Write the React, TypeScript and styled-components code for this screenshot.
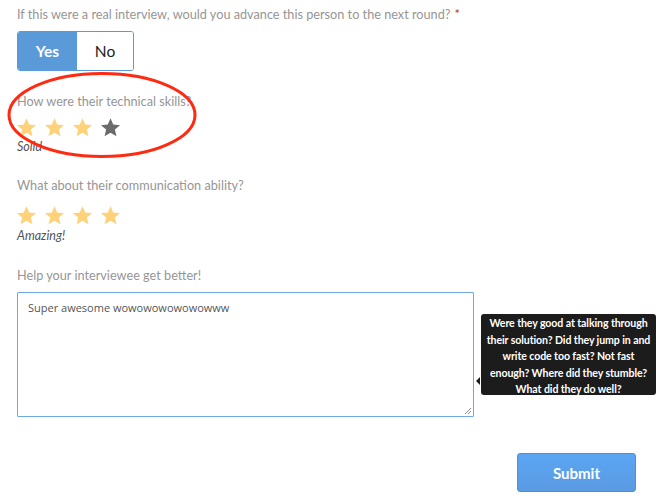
import React from "react";
import styled, { createGlobalStyle } from "styled-components";

const Global = createGlobalStyle`
  html, body { margin: 0; padding: 0; background: #fff; }
  body { font-family: Lato, "Open Sans", sans-serif; }
`;

const Page = styled.div`
  position: relative;
  width: 663px;
  height: 501px;
  box-sizing: border-box;
  padding: 5px 27px 0 17px;
  display: flex;
  flex-direction: column;
`;

const Label = styled.div<{ $mt?: number }>`
  font-size: 12.7px;
  line-height: 18px;
  color: #969696;
  margin-top: ${(p) => p.$mt ?? 0}px;
`;

const Req = styled.span`
  color: #a33;
  margin-left: 4px;
`;

const Toggle = styled.div`
  display: flex;
  width: 117px;
  height: 40px;
  margin-top: 8px;
  border: 1px solid #5b9ad8;
  border-radius: 3px;
  box-sizing: border-box;
  overflow: hidden;
`;

const ToggleBtn = styled.div<{ $active?: boolean }>`
  flex: ${(p) => (p.$active ? "0 0 59px" : "1")};
  display: flex;
  align-items: center;
  justify-content: center;
  font-size: 15.5px;
  font-weight: ${(p) => (p.$active ? 700 : 400)};
  color: ${(p) => (p.$active ? "#fff" : "#222")};
  background: ${(p) => (p.$active ? "#5b9ad8" : "#fff")};
`;

const Stars = styled.div<{ $mt: number }>`
  display: flex;
  gap: 7px;
  margin-top: ${(p) => p.$mt}px;
  margin-left: -1px;
  height: 21px;
`;

const Caption = styled.div<{ $mt: number }>`
  font-size: 12.5px;
  line-height: 16px;
  font-style: italic;
  color: #555;
  margin-top: ${(p) => p.$mt}px;
`;

const FieldRow = styled.div`
  position: relative;
  margin-top: 8px;
`;

const TextArea = styled.div`
  width: 457px;
  height: 125px;
  box-sizing: border-box;
  border: 1px solid #6ea8e6;
  border-radius: 1px;
  padding: 7px 10px;
  font-family: "Open Sans", sans-serif;
  font-size: 11px;
  line-height: 16px;
  color: #555;
  position: relative;
`;

const Grip = styled.svg`
  position: absolute;
  right: 1px;
  bottom: 1px;
`;

const Tooltip = styled.div`
  position: absolute;
  left: 464px;
  top: 22px;
  width: 175px;
  height: 81px;
  box-sizing: border-box;
  background: #1c1c1c;
  border-radius: 3px;
  color: #fff;
  font-family: Lato, sans-serif;
  font-weight: 700;
  font-size: 10.6px;
  line-height: 16.6px;
  text-align: center;
  padding: 1px 4px 0;
  letter-spacing: -0.1px;
`;

const Arrow = styled.div`
  position: absolute;
  left: -5px;
  top: 63px;
  width: 0;
  height: 0;
  border-top: 4px solid transparent;
  border-bottom: 4px solid transparent;
  border-right: 4px solid #1c1c1c;
`;

const Footer = styled.div`
  display: flex;
  justify-content: flex-end;
  margin-top: 36px;
`;

const Submit = styled.div`
  width: 119px;
  height: 39px;
  box-sizing: border-box;
  border: 1px solid #4f8fd6;
  border-radius: 3px;
  background: linear-gradient(#5ba5f3, #5a9be2);
  color: #fff;
  font-weight: 700;
  font-size: 15px;
  display: flex;
  align-items: center;
  justify-content: center;
`;

const Annotation = styled.svg`
  position: absolute;
  left: 0;
  top: 0;
  pointer-events: none;
`;

const Star = ({ on }: { on: boolean }) => (
  <svg width="21" height="21" viewBox="0 0 24 24">
    <path
      d="M12 1.5l3.1 7.2 7.8.6-5.9 5.1 1.8 7.6L12 18l-6.8 4 1.8-7.6-5.9-5.1 7.8-.6z"
      fill={on ? "#fdd27a" : "#6b6b6b"}
    />
  </svg>
);

const Rating = ({ value, mt }: { value: number; mt: number }) => (
  <Stars $mt={mt}>
    {[1, 2, 3, 4].map((i) => (
      <Star key={i} on={i <= value} />
    ))}
  </Stars>
);

export default function App() {
  return (
    <Page>
      <Global />
      <Label>
        If this were a real interview, would you advance this person to the next round?
        <Req>*</Req>
      </Label>
      <Toggle>
        <ToggleBtn $active>Yes</ToggleBtn>
        <ToggleBtn>No</ToggleBtn>
      </Toggle>
      <Label $mt={21}>How were their technical skills?</Label>
      <Rating value={3} mt={7} />
      <Caption $mt={1}>Solid</Caption>
      <Label $mt={21}>What about their communication ability?</Label>
      <Rating value={4} mt={11} />
      <Caption $mt={2}>Amazing!</Caption>
      <Label $mt={22}>Help your interviewee get better!</Label>
      <FieldRow>
        <TextArea>
          Super awesome wowowowowowowww
          <Grip width="10" height="10" viewBox="0 0 10 10">
            <path d="M9 3L3 9M9 6L6 9" stroke="#888" strokeWidth="1" />
          </Grip>
        </TextArea>
        <Tooltip>
          <Arrow />
          Were they good at talking through
          <br />
          their solution? Did they jump in and
          <br />
          write code too fast? Not fast
          <br />
          enough? Where did they stumble?
          <br />
          What did they do well?
        </Tooltip>
      </FieldRow>
      <Footer>
        <Submit>Submit</Submit>
      </Footer>
      <Annotation width="663" height="501">
        <ellipse cx="102" cy="115" rx="93" ry="41.5" fill="none" stroke="#ff2a12" strokeWidth="3" />
      </Annotation>
    </Page>
  );
}
